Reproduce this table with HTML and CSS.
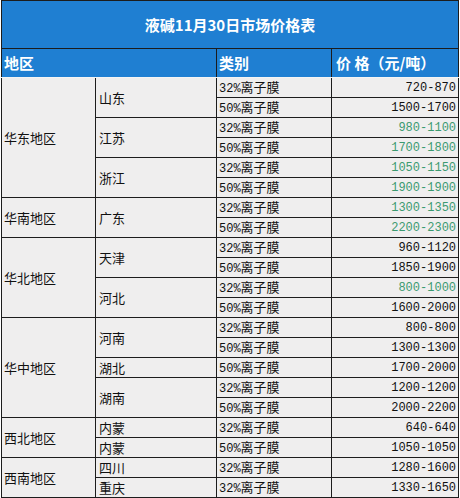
FILE: index.html
```
<!DOCTYPE html>
<html lang="zh">
<head>
<meta charset="utf-8">
<title>液碱11月30日市场价格表</title>
<link rel="stylesheet" href="styles.css">
</head>
<body>
<table class="price-table">
  <colgroup>
    <col class="c1"><col class="c2"><col class="c3"><col class="c4">
  </colgroup>
  <tr class="title-row"><td colspan="4">液碱11月30日市场价格表</td></tr>
  <tr class="head-row">
    <td colspan="2">地区</td>
    <td>类别</td>
    <td class="price-head">价 格（元/吨）</td>
  </tr>
  <tr>
    <td rowspan="6" class="region">华东地区</td>
    <td rowspan="2" class="prov">山东</td>
    <td class="type"><span class="n">32%</span>离子膜</td><td class="price">720-870</td>
  </tr>
  <tr><td class="type"><span class="n">50%</span>离子膜</td><td class="price">1500-1700</td></tr>
  <tr>
    <td rowspan="2" class="prov">江苏</td>
    <td class="type"><span class="n">32%</span>离子膜</td><td class="price green">980-1100</td>
  </tr>
  <tr><td class="type"><span class="n">50%</span>离子膜</td><td class="price green">1700-1800</td></tr>
  <tr>
    <td rowspan="2" class="prov">浙江</td>
    <td class="type"><span class="n">32%</span>离子膜</td><td class="price green">1050-1150</td>
  </tr>
  <tr><td class="type"><span class="n">50%</span>离子膜</td><td class="price green">1900-1900</td></tr>
  <tr>
    <td rowspan="2" class="region">华南地区</td>
    <td rowspan="2" class="prov">广东</td>
    <td class="type"><span class="n">32%</span>离子膜</td><td class="price green">1300-1350</td>
  </tr>
  <tr><td class="type"><span class="n">50%</span>离子膜</td><td class="price green">2200-2300</td></tr>
  <tr>
    <td rowspan="4" class="region">华北地区</td>
    <td rowspan="2" class="prov">天津</td>
    <td class="type"><span class="n">32%</span>离子膜</td><td class="price">960-1120</td>
  </tr>
  <tr><td class="type"><span class="n">50%</span>离子膜</td><td class="price">1850-1900</td></tr>
  <tr>
    <td rowspan="2" class="prov">河北</td>
    <td class="type"><span class="n">32%</span>离子膜</td><td class="price green">800-1000</td>
  </tr>
  <tr><td class="type"><span class="n">50%</span>离子膜</td><td class="price">1600-2000</td></tr>
  <tr>
    <td rowspan="5" class="region">华中地区</td>
    <td rowspan="2" class="prov">河南</td>
    <td class="type"><span class="n">32%</span>离子膜</td><td class="price">800-800</td>
  </tr>
  <tr><td class="type"><span class="n">50%</span>离子膜</td><td class="price">1300-1300</td></tr>
  <tr>
    <td class="prov">湖北</td>
    <td class="type"><span class="n">50%</span>离子膜</td><td class="price">1700-2000</td>
  </tr>
  <tr>
    <td rowspan="2" class="prov">湖南</td>
    <td class="type"><span class="n">32%</span>离子膜</td><td class="price">1200-1200</td>
  </tr>
  <tr><td class="type"><span class="n">50%</span>离子膜</td><td class="price">2000-2200</td></tr>
  <tr>
    <td rowspan="2" class="region">西北地区</td>
    <td class="prov">内蒙</td>
    <td class="type"><span class="n">32%</span>离子膜</td><td class="price">640-640</td>
  </tr>
  <tr>
    <td class="prov">内蒙</td>
    <td class="type"><span class="n">50%</span>离子膜</td><td class="price">1050-1050</td>
  </tr>
  <tr>
    <td rowspan="2" class="region">西南地区</td>
    <td class="prov">四川</td>
    <td class="type"><span class="n">32%</span>离子膜</td><td class="price">1280-1600</td>
  </tr>
  <tr>
    <td class="prov">重庆</td>
    <td class="type"><span class="n">32%</span>离子膜</td><td class="price">1330-1650</td>
  </tr>
</table>
</body>
</html>
```

FILE: styles.css
```
html, body {
  margin: 0;
  padding: 0;
  background: #ffffff;
}

body {
  padding-left: 1px;
  font-family: "Noto Sans CJK SC", "DejaVu Sans", sans-serif;
}

.price-table {
  border-collapse: collapse;
  table-layout: fixed;
  width: 457px;
  font-size: 13px;
  color: #111;
}

.c1 { width: 94px; }
.c2 { width: 121px; }
.c3 { width: 115px; }
.c4 { width: 127px; }

.price-table td {
  border: 1px solid #1c1c1c;
  background: #efeeee;
  padding: 0 2px;
  height: 19px;
  line-height: 14px;
  white-space: nowrap;
  overflow: hidden;
  vertical-align: middle;
}

.price-table .title-row td {
  background: #1f7fd2;
  color: #ffffff;
  font-weight: bold;
  font-size: 15px;
  text-align: center;
  height: 47px;
  line-height: 18px;
}

.price-table .head-row td {
  background: #1f7fd2;
  color: #ffffff;
  font-weight: bold;
  font-size: 15px;
  height: 28px;
  line-height: 18px;
  border-bottom-color: #f4f4f4;
}

.price-table .head-row .price-head {
  padding-left: 4px;
}

.price-table .region {
  padding-left: 2px;
}

.price-table .prov {
  padding-left: 3px;
}

.n {
  font-family: "Liberation Mono", monospace;
  font-size: 12px;
  line-height: 14px;
}

.price-table .price {
  text-align: right;
  font-family: "Liberation Mono", monospace;
  font-size: 12px;
  padding-right: 2px;
}

.price-table .price.green {
  color: #3c9a70;
}
```
